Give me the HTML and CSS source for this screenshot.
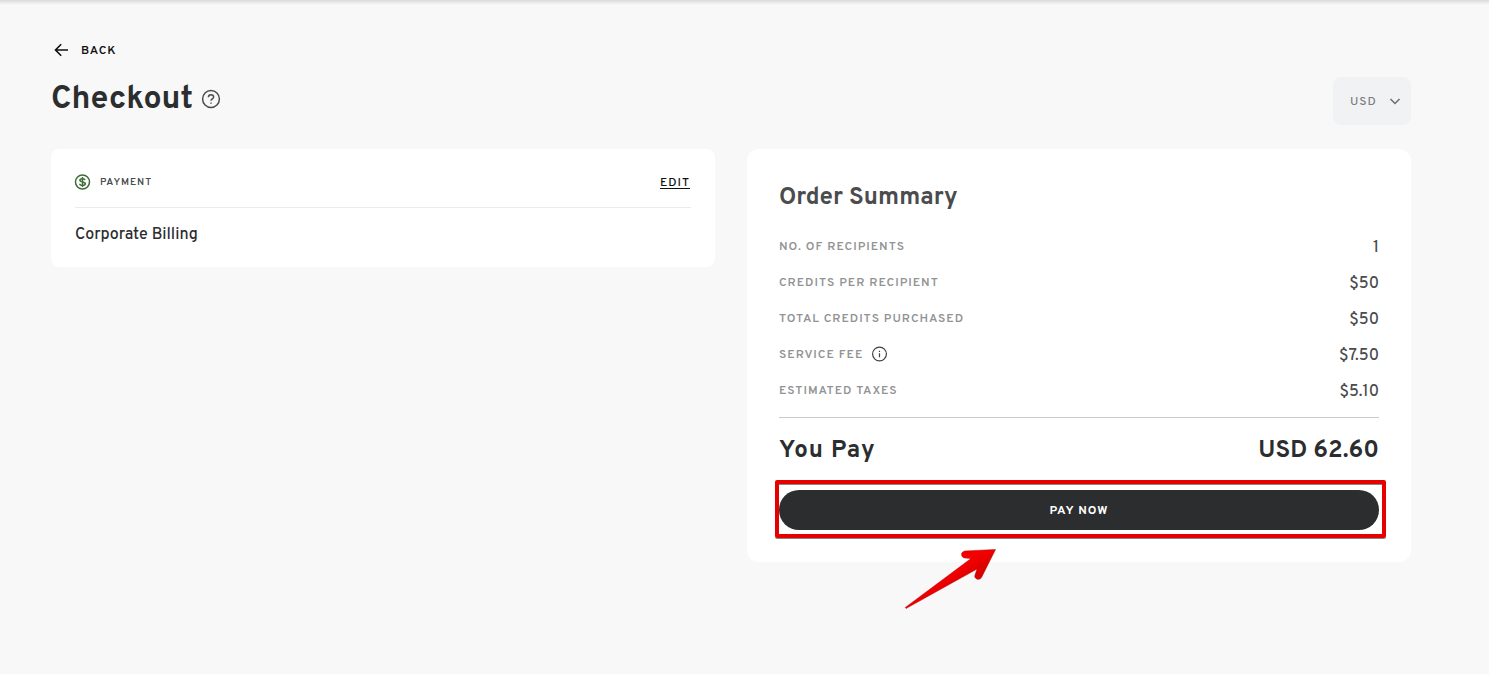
FILE: index.html
```html
<!DOCTYPE html>
<html lang="en">
<head>
<meta charset="utf-8">
<meta name="viewport" content="width=device-width, initial-scale=1">
<title>Checkout</title>
<link rel="stylesheet" href="styles.css">
</head>
<body>
<main class="page">
  <a class="back" href="#">
    <svg class="back-icon" viewBox="0 0 20 20" aria-hidden="true"><path d="M17 10H4.500M10.200 4.200L4.500 10l5.700 5.800"/></svg>
    <span>BACK</span>
  </a>
  <header class="heading">
    <div class="title-group">
      <h1 class="title">Checkout</h1>
      <button class="help" type="button" aria-label="Help">
        <svg class="help-icon" viewBox="0 0 20 20" aria-hidden="true"><circle cx="10" cy="10" r="8.4"/><path d="M7.4 8.2C7.4 6.6 8.5 5.7 10 5.7s2.6.9 2.6 2.3c0 1.9-2.6 2-2.6 3.8"/><path d="M10 13.4v1.3"/></svg>
      </button>
    </div>
    <div class="currency">
      <select class="currency-select" aria-label="Currency"><option>USD</option></select>
      <svg class="chevron" viewBox="0 0 12 12" aria-hidden="true"><path d="M1.500 4l4.500 4.500L10.500 4"/></svg>
    </div>
  </header>
  <div class="columns">
    <section class="card payment">
      <div class="payment-head">
        <svg class="dollar" viewBox="0 0 16 16" aria-hidden="true"><circle cx="7.500" cy="8" r="7"/><path d="M10.100 6.100C9.900 5.200 8.900 4.700 7.500 4.700c-1.500 0-2.600.6-2.600 1.600 0 2.400 5.400 1 5.400 3.400 0 1-1.200 1.700-2.800 1.700s-2.700-.6-2.800-1.600M7.500 3v10"/></svg>
        <h2 class="payment-title">PAYMENT</h2>
        <a class="edit" href="#">EDIT</a>
      </div>
      <p class="method">Corporate Billing</p>
    </section>
    <section class="card summary">
      <h2 class="summary-title">Order Summary</h2>
      <dl class="lines">
        <div class="line"><dt>NO. OF RECIPIENTS</dt><dd>1</dd></div>
        <div class="line"><dt>CREDITS PER RECIPIENT</dt><dd>$50</dd></div>
        <div class="line"><dt>TOTAL CREDITS PURCHASED</dt><dd>$50</dd></div>
        <div class="line"><dt>SERVICE FEE <svg class="info" viewBox="0 0 16 16" aria-hidden="true"><circle cx="8.500" cy="7" r="6.900"/><path d="M8.500 6.200v4M8.500 3.800v1.200"/></svg></dt><dd>$7.50</dd></div>
        <div class="line"><dt>ESTIMATED TAXES</dt><dd>$5.10</dd></div>
      </dl>
      <div class="total"><span>You Pay</span><span class="amount">USD 62.60</span></div>
      <div class="action">
        <button class="pay" type="button">PAY NOW</button>
        <div class="highlight"></div>
        <svg class="arrow" viewBox="0 0 96 64" aria-hidden="true">
          <defs><linearGradient id="red" x1="0" y1="0" x2="1" y2="1"><stop offset=".45" stop-color="#f40000"/><stop offset=".6" stop-color="#d90000"/></linearGradient></defs>
          <path d="M1.300 59.500L67 10.500 61 10C56.500 9.700 56.300 3.500 61 3L91.500 1.500 77.500 29.500C75.500 33 69.500 31 71 27L73 21 2 60.500Z"/>
        </svg>
      </div>
    </section>
  </div>
</main>
</body>
</html>
```
FILE: styles.css
```css
* { box-sizing: border-box; }
body {
  margin: 0;
  min-height: 100vh;
  background: linear-gradient(#dadada, #f8f8f8 5px) #f8f8f8 no-repeat;
  color: #2b2d2f;
  font-family: Overpass, Roboto, "Open Sans", sans-serif;
}
h1, h2, p, dl, dd { margin: 0; }
svg { fill: none; stroke: currentColor; flex: none; overflow: visible; }
button, select { font: inherit; border: 0; }
.page { padding: 38px 78px 40px 51px; }
.back {
  display: flex;
  align-items: center;
  gap: 10px;
  width: fit-content;
  height: 24px;
  color: #111;
  font-size: 12px;
  font-weight: 600;
  letter-spacing: 1px;
  text-decoration: none;
}
.back span { padding-top: 2px; }
.back-icon { width: 20px; height: 20px; stroke-width: 1.6; }
.heading {
  display: flex;
  align-items: flex-start;
  justify-content: space-between;
  margin: 15px 0 24px;
}
.title-group { display: flex; align-items: center; gap: 8px; }
.title { padding-top: 2px; font-size: 32px; line-height: 42px; font-weight: 700; }
.help { padding: 0; background: none; color: #4a4c4e; display: flex; }
.help-icon { width: 20px; height: 20px; stroke-width: 1.5; }
.currency { position: relative; }
.currency-select {
  appearance: none;
  display: block;
  width: 78px;
  height: 48px;
  padding: 2px 30px 0 17px;
  border-radius: 8px;
  background: #f1f2f4;
  color: #7b7d7f;
  font-size: 12px;
  font-weight: 500;
  letter-spacing: 1px;
}
.chevron {
  position: absolute;
  right: 10px;
  top: 18px;
  width: 12px;
  height: 12px;
  color: #6b6d6f;
  stroke-width: 1.5;
  pointer-events: none;
}
.columns {
  display: grid;
  grid-template-columns: 1fr 1fr;
  align-items: start;
  gap: 32px;
}
.card { background: #fff; }
.payment { padding: 24px 24px 22px; border-radius: 8px; }
.payment-head {
  display: flex;
  align-items: center;
  height: 35px;
  padding-bottom: 16px;
  border-bottom: 1px solid #ebebeb;
}
.dollar { width: 16px; height: 16px; color: #3c6e37; stroke-width: 1.5; }
.payment-title {
  margin-left: 9px;
  color: #4a4c4e;
  font-size: 10px;
  font-weight: 600;
  letter-spacing: 1px;
}
.edit {
  margin-left: auto;
  padding: 2px 1px 0 0;
  color: #111;
  font-size: 12px;
  font-weight: 500;
  letter-spacing: 1px;
  text-underline-offset: 2px;
}
.method { margin-top: 17px; font-size: 16px; line-height: 20px; font-weight: 500; }
.summary { padding: 34px 32px 32px; border-radius: 12px; }
.summary-title {
  margin-bottom: 16px;
  color: #4a4c4e;
  font-size: 24px;
  line-height: 30px;
  font-weight: 700;
}
.lines { padding-bottom: 8px; border-bottom: 1px solid #c9cacb; }
.line { display: flex; align-items: center; justify-content: space-between; height: 36px; }
.line dt {
  display: flex;
  align-items: center;
  gap: 8px;
  color: #919395;
  font-size: 12px;
  font-weight: 600;
  letter-spacing: 1px;
}
.line dd { padding-top: 2px; color: #4a4c4e; font-size: 16px; font-weight: 500; }
.info { width: 16px; height: 16px; color: #3f4143; stroke-width: 1.2; }
.total {
  display: flex;
  justify-content: space-between;
  margin: 18px 0 24px;
  font-size: 24px;
  line-height: 30px;
  font-weight: 700;
  letter-spacing: 1px;
}
.amount { letter-spacing: normal; }
.action { position: relative; }
.pay {
  display: block;
  width: 100%;
  height: 40px;
  padding: 2px 0 0;
  border-radius: 20px;
  background: #2b2d2f;
  color: #fff;
  font-size: 12px;
  font-weight: 700;
  letter-spacing: 1px;
}
.highlight {
  position: absolute;
  inset: -10px -7px -8px -4px;
  border: 4px solid #e60000;
  border-radius: 2px;
  box-shadow: 0 1px 0 #888, inset 0 1px 0 #888;
  pointer-events: none;
}
.arrow {
  position: absolute;
  left: 125px;
  top: 58px;
  width: 96px;
  height: 64px;
  fill: url(#red);
  stroke: #b80000;
  stroke-width: 0.5;
  pointer-events: none;
}
```
